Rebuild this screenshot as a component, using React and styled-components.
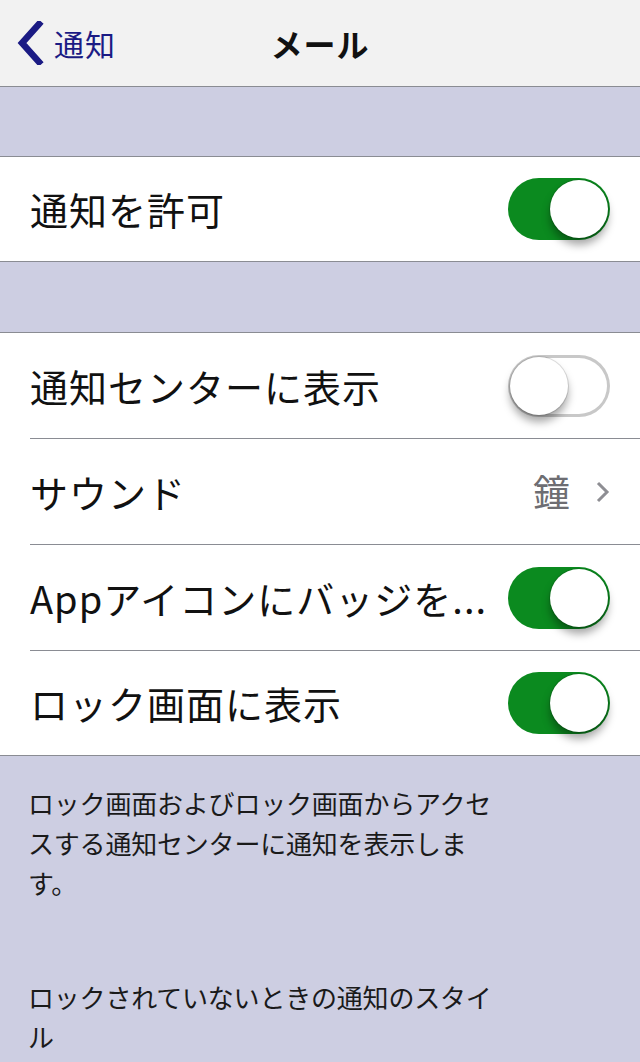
import React from "react";
import styled, { createGlobalStyle } from "styled-components";

const Global = createGlobalStyle`
  html, body { margin: 0; padding: 0; background: #cdcee2; }
  body { font-family: "Noto Sans CJK JP", "Noto Sans", sans-serif; }
  * { box-sizing: border-box; }
`;

const Page = styled.div`
  width: 640px;
  min-height: 1062px;
  background: #cdcee2;
  overflow: hidden;
`;

const NavBar = styled.header`
  height: 87px;
  background: #f2f2f2;
  border-bottom: 1px solid #8a8c93;
  display: grid;
  grid-template-columns: 1fr auto 1fr;
  align-items: center;
`;

const Back = styled.div`
  display: flex;
  align-items: center;
  gap: 10px;
  padding-left: 16px;
  color: #1b1b84;
  font-size: 30px;
  line-height: 1;
  letter-spacing: 1px;
`;

const Title = styled.div`
  font-size: 32px;
  font-weight: 700;
  color: #111;
  letter-spacing: 1px;
`;

const Gap = styled.div`
  height: ${(p) => p.$h}px;
`;

const Group = styled.section`
  background: #fff;
  border-top: 1px solid #8a8c93;
  border-bottom: 1px solid #8a8c93;
`;

const Row = styled.div`
  height: ${(p) => (p.$last ? 104 : 106)}px;
  margin-left: 30px;
  padding-right: 30px;
  display: flex;
  align-items: center;
  justify-content: space-between;
  border-bottom: ${(p) => (p.$last ? "none" : "1px solid #8a8c93")};
`;

const Label = styled.span`
  font-size: 38px;
  letter-spacing: 1px;
  color: #111;
  white-space: nowrap;
  line-height: 1;
`;

const Detail = styled.div`
  display: flex;
  align-items: center;
  gap: 26px;
  color: #6d6d72;
  font-size: 37px;
  line-height: 1;
`;

const Track = styled.div`
  position: relative;
  width: 102px;
  height: 62px;
  border-radius: 31px;
  background: ${(p) => (p.$on ? "#0b8a1f" : "#fff")};
  box-shadow: ${(p) => (p.$on ? "none" : "inset 0 0 0 3px #c8c8c8")};
`;

const Knob = styled.div`
  position: absolute;
  top: 2px;
  left: ${(p) => (p.$on ? "42px" : "2px")};
  width: 58px;
  height: 58px;
  border-radius: 50%;
  background: #fff;
  box-shadow: 0 7px 8px rgba(0, 0, 0, 0.35), 0 0 0 1px rgba(0, 0, 0, 0.12);
`;

const Footer = styled.p`
  margin: 0;
  width: 480px;
  margin-left: 28px;
  padding-top: ${(p) => p.$top}px;
  font-size: 26px;
  line-height: 40px;
  color: #1a1a1a;
  letter-spacing: -0.2px;
`;

const Toggle = ({ on }) => (
  <Track $on={on}>
    <Knob $on={on} />
  </Track>
);

export default function App() {
  return (
    <Page>
      <Global />
      <NavBar>
        <Back>
          <svg width="28" height="44" viewBox="0 0 28 44">
            <path d="M23 3 L6 22 L23 41" fill="none" stroke="#1b1b84" strokeWidth="6.5" strokeLinecap="square" />
          </svg>
          <span>通知</span>
        </Back>
        <Title>メール</Title>
        <div />
      </NavBar>
      <Gap $h={69} />
      <Group>
        <Row $last>
          <Label>通知を許可</Label>
          <Toggle on />
        </Row>
      </Group>
      <Gap $h={70} />
      <Group>
        <Row>
          <Label>通知センターに表示</Label>
          <Toggle on={false} />
        </Row>
        <Row>
          <Label>サウンド</Label>
          <Detail>
            <span>鐘</span>
            <svg width="14" height="22" viewBox="0 0 14 22">
              <path d="M2 2 L11 11 L2 20" fill="none" stroke="#8e8e93" strokeWidth="3" />
            </svg>
          </Detail>
        </Row>
        <Row>
          <Label>Appアイコンにバッジを...</Label>
          <Toggle on />
        </Row>
        <Row $last>
          <Label>ロック画面に表示</Label>
          <Toggle on />
        </Row>
      </Group>
      <Footer $top={27}>
        ロック画面およびロック画面からアクセスする通知センターに通知を表示します。
      </Footer>
      <Footer $top={74}>ロックされていないときの通知のスタイル</Footer>
    </Page>
  );
}
